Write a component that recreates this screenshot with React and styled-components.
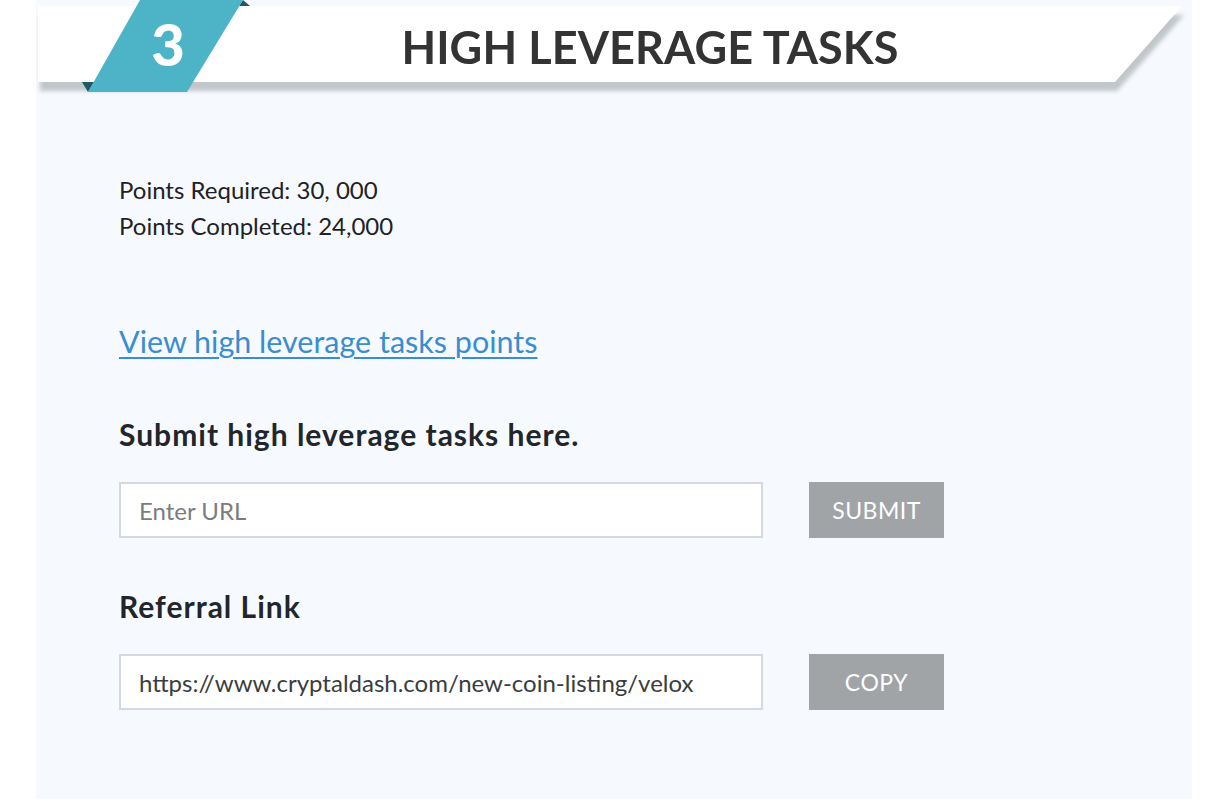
import React from "react";
import styled, { createGlobalStyle } from "styled-components";

const GlobalStyle = createGlobalStyle`
  body {
    margin: 0;
    background: #ffffff;
    font-family: "Lato", "Noto Sans", sans-serif;
  }
`;

const App = () => {
  return (
    <>
      <GlobalStyle />
      <StPanel>
        <StHeader>
          <StBannerShadow>
            <StBanner>
              <StTitle>HIGH LEVERAGE TASKS</StTitle>
            </StBanner>
          </StBannerShadow>
          <StBadge>
            <svg width="168" height="92" viewBox="0 0 168 92">
              <polygon points="0,82 12,82 6,92" fill="#1f5866" />
              <polygon points="168,6 157,6 161,0" fill="#1f5866" />
              <polygon points="58,0 161,0 105,92 6,92" fill="#4db4c7" />
            </svg>
            <StBadgeNumber>3</StBadgeNumber>
          </StBadge>
        </StHeader>

        <StContent>
          <StPoints>
            <div>Points Required: 30, 000</div>
            <div>Points Completed: 24,000</div>
          </StPoints>

          <StLink href="#">View high leverage tasks points</StLink>

          <StHeading top="53px">Submit high leverage tasks here.</StHeading>
          <StRow>
            <StInput placeholder="Enter URL" />
            <StButton>SUBMIT</StButton>
          </StRow>

          <StHeading top="48px">Referral Link</StHeading>
          <StRow>
            <StInput defaultValue="https://www.cryptaldash.com/new-coin-listing/velox" readOnly />
            <StButton>COPY</StButton>
          </StRow>
        </StContent>
      </StPanel>
    </>
  );
};

export default App;

const StPanel = styled.div`
  margin-left: 36px;
  width: 1156px;
  min-height: 799px;
  background-color: #f6fafe;
`;

const StHeader = styled.div`
  position: relative;
  height: 93px;
  padding-top: 6px;
  box-sizing: border-box;
`;

const StBannerShadow = styled.div`
  filter: drop-shadow(2px 9px 2px rgba(120, 126, 132, 0.42));
`;

const StBanner = styled.div`
  margin-left: 2px;
  width: 1144px;
  height: 76px;
  background-color: #ffffff;
  clip-path: polygon(0 0, 100% 0, calc(100% - 67px) 100%, 0 100%);
  display: flex;
  align-items: center;
  justify-content: center;
`;

const StTitle = styled.h1`
  margin: 6px 0 0 80px;
  font-size: 45px;
  font-weight: 700;
  color: #333333;
  letter-spacing: 0.1px;
`;

const StBadge = styled.div`
  position: absolute;
  left: 46px;
  top: 0;
  width: 168px;
  height: 92px;
  svg {
    display: block;
  }
`;

const StBadgeNumber = styled.span`
  position: absolute;
  left: 0;
  top: 0;
  width: 172px;
  line-height: 88px;
  text-align: center;
  font-size: 58px;
  font-weight: 900;
  color: #ffffff;
`;

const StContent = styled.div`
  padding: 79px 0 60px 83px;
`;

const StPoints = styled.div`
  font-size: 24px;
  line-height: 36px;
  color: #1e2226;
`;

const StLink = styled.a`
  display: inline-block;
  margin-top: 77px;
  font-size: 30.5px;
  line-height: 40px;
  color: #3a8dcf;
  text-decoration: underline;
  text-underline-offset: 4px;
  text-decoration-thickness: 2px;
`;

const StHeading = styled.h2`
  margin: ${({ top }) => top} 0 0;
  font-size: 30px;
  line-height: 40px;
  font-weight: 700;
  letter-spacing: 1px;
  color: #22262a;
`;

const StRow = styled.div`
  display: flex;
  gap: 46px;
  margin-top: 28px;
`;

const StInput = styled.input`
  width: 644px;
  height: 56px;
  box-sizing: border-box;
  border: 2px solid #d3d9df;
  background-color: #ffffff;
  padding: 0 18px;
  font-family: "Lato", "Noto Sans", sans-serif;
  font-size: 24px;
  color: #3a3d40;
  outline: none;
  &::placeholder {
    color: #7a7d80;
  }
`;

const StButton = styled.button`
  width: 135px;
  height: 56px;
  border: none;
  background-color: #a0a4a7;
  color: #ffffff;
  font-family: "Lato", "Noto Sans", sans-serif;
  font-size: 23px;
  letter-spacing: 0.5px;
  cursor: pointer;
`;
